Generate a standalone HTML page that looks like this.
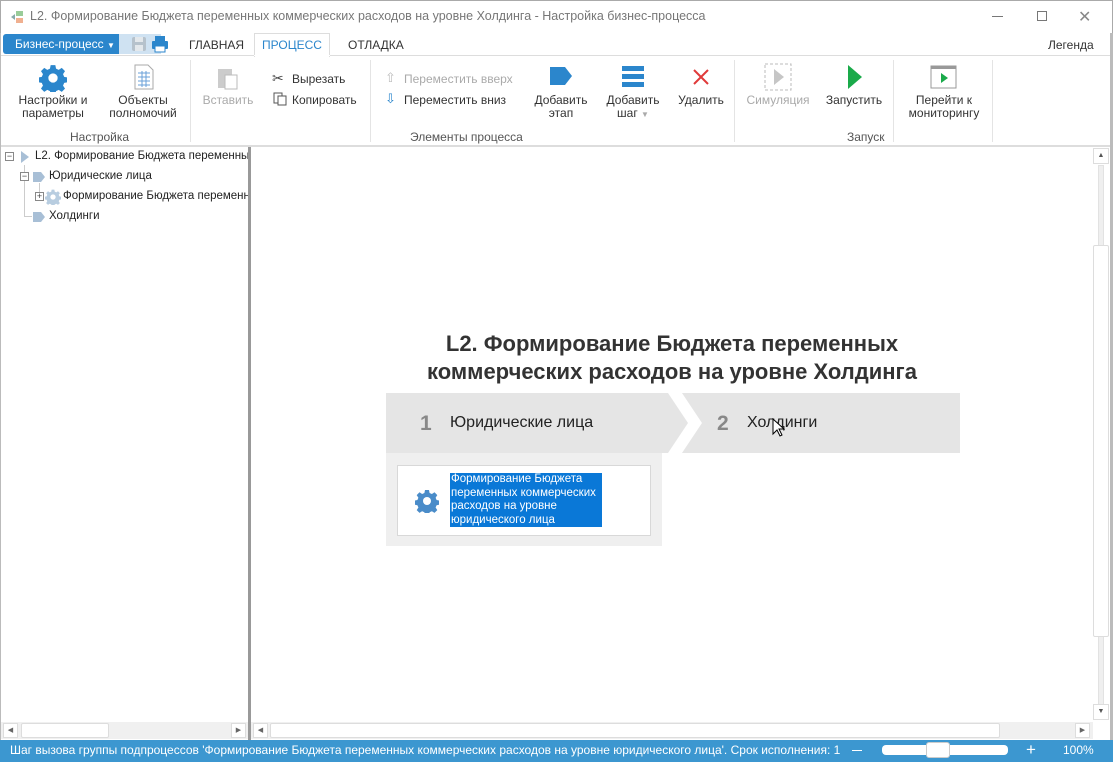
<!DOCTYPE html>
<html><head><meta charset="utf-8"><style>
*{margin:0;padding:0;box-sizing:border-box}
body{width:1113px;height:762px;position:relative;overflow:hidden;background:#fff;font-family:"Segoe UI","Liberation Sans","DejaVu Sans",sans-serif;font-size:12px;color:#222}
.a{position:absolute;white-space:nowrap}
.lbl{position:absolute;text-align:center;font-size:12px;line-height:13px;color:#333}
.grp{position:absolute;top:130px;font-size:12px;color:#555}
.sep{position:absolute;top:60px;width:1px;height:82px;background:#e4e4e4}
.dis{color:#aaa}
</style></head><body>
<div class="a" style="left:0;top:0;width:1113px;height:33px;border-top:1px solid #aaa;border-left:1px solid #aaa;border-right:1px solid #aaa"></div>
<svg class="a" style="left:10px;top:10px" width="16" height="14"><rect x="6" y="1" width="7" height="5" fill="#9c9"/><rect x="6" y="8" width="7" height="5" fill="#f0b090"/><path d="M1 7 L5 4 L5 10Z" fill="#8aa"/></svg>
<div class="a" style="left:30px;top:9px;font-size:12.5px;color:#777">L2. Формирование Бюджета переменных коммерческих расходов на уровне Холдинга - Настройка бизнес-процесса</div>
<div class="a" style="left:992px;top:16px;width:11px;height:1px;background:#777"></div>
<div class="a" style="left:1037px;top:11px;width:10px;height:10px;border:1px solid #777"></div>
<div class="a" style="left:1078px;top:7px;font-size:16px;color:#888">✕</div>
<div class="a" style="left:3px;top:34px;width:123px;height:20px;background:#2b86cc;border-radius:3px;color:#fff;font-size:12px;padding:3px 0 0 12px">Бизнес-процесс <span style="font-size:8px">▼</span></div>
<div class="a" style="left:119px;top:34px;width:42px;height:20px;background:#cfe2f2"></div>
<svg class="a" style="left:131px;top:36px" width="16" height="16"><rect x="1" y="1" width="14" height="14" rx="2" fill="#b6c2cc"/><rect x="4" y="1" width="8" height="5" fill="#e3e8ec"/><rect x="4" y="9" width="8" height="6" fill="#e3e8ec"/></svg>
<svg class="a" style="left:151px;top:35px" width="18" height="18"><rect x="4" y="1" width="10" height="5" fill="#2b86cc"/><rect x="1" y="6" width="16" height="8" rx="1" fill="#2b86cc"/><rect x="4" y="11" width="10" height="6" fill="#fff" stroke="#2b86cc"/></svg>
<div class="a" style="left:189px;top:38px;font-size:12px;color:#333">ГЛАВНАЯ</div>
<div class="a" style="left:254px;top:33px;width:76px;height:24px;border:1px solid #ddd;border-bottom:none;background:#fff;text-align:center;padding-top:4px;color:#2b86cc">ПРОЦЕСС</div>
<div class="a" style="left:348px;top:38px;color:#333">ОТЛАДКА</div>
<div class="a" style="left:1048px;top:38px;color:#333">Легенда</div>
<div class="a" style="left:0;top:55px;width:1113px;height:1px;background:#ddd"></div>
<div class="a" style="left:254px;top:55px;width:76px;height:1px;background:#fff"></div>
<svg class="a" style="left:39px;top:64px" width="28" height="28" viewBox="0 0 24 24"><path fill="#2b86cc" d="M10 1h4l.6 3 2.3 1 2.6-1.7 2.8 2.8-1.7 2.6 1 2.3 3 .6v4l-3 .6-1 2.3 1.7 2.6-2.8 2.8-2.6-1.7-2.300 1-.6 3h-4l-.6-3-2.3-1-2.6 1.7-2.8-2.8 1.7-2.6-1-2.3-3-.6v-4l3-.6 1-2.3-1.7-2.6 2.8-2.8 2.6 1.7 2.3-1z"/><circle cx="12" cy="12" r="4" fill="#fff"/></svg>
<div class="lbl" style="left:12px;top:94px;width:82px">Настройки и<br>параметры</div>
<svg class="a" style="left:133px;top:64px" width="22" height="26"><path d="M2 1h13l5 5v19H2z" fill="#fff" stroke="#aaa"/><g stroke="#6aa0d8"><path d="M5 9h12M5 13h12M5 17h12M5 21h12M9 7v16M13 7v16"/></g></svg>
<div class="lbl" style="left:100px;top:94px;width:86px">Объекты<br>полномочий</div>
<div class="grp" style="left:70px">Настройка</div>
<div class="sep" style="left:190px"></div>
<svg class="a" style="left:217px;top:66px" width="22" height="24"><rect x="1" y="3" width="14" height="19" fill="#ccc"/><rect x="8" y="9" width="12" height="14" fill="#fff" stroke="#bbb"/></svg>
<div class="lbl dis" style="left:198px;top:94px;width:60px;color:#aaa">Вставить</div>
<div class="a" style="left:272px;top:70px;font-size:14px;color:#444">✂</div>
<div class="a" style="left:292px;top:72px;color:#333">Вырезать</div>
<svg class="a" style="left:273px;top:92px" width="14" height="14"><rect x="1" y="1" width="8" height="10" fill="#fff" stroke="#555"/><rect x="5" y="4" width="8" height="9" fill="#fff" stroke="#555"/></svg>
<div class="a" style="left:292px;top:93px;color:#333">Копировать</div>
<div class="sep" style="left:370px"></div>
<div class="a" style="left:385px;top:70px;color:#bbb;font-size:13px">⇧</div>
<div class="a" style="left:404px;top:72px;color:#aaa">Переместить вверх</div>
<div class="a" style="left:385px;top:91px;color:#2b86cc;font-size:13px">⇩</div>
<div class="a" style="left:404px;top:93px;color:#333">Переместить вниз</div>
<div class="grp" style="left:410px">Элементы процесса</div>
<svg class="a" style="left:550px;top:67px" width="24" height="18"><path d="M0 0h15l7 9-7 9H0z" fill="#2b86cc"/></svg>
<div class="lbl" style="left:526px;top:94px;width:70px">Добавить<br>этап</div>
<svg class="a" style="left:622px;top:66px" width="22" height="22"><rect y="0" width="22" height="5" fill="#2b86cc"/><rect y="8" width="22" height="5" fill="#2b86cc"/><rect y="16" width="22" height="5" fill="#2b86cc"/></svg>
<div class="lbl" style="left:598px;top:94px;width:70px">Добавить<br>шаг <span style="color:#aaa;font-size:8px">▼</span></div>
<svg class="a" style="left:692px;top:68px" width="18" height="18"><path d="M2 2L16 16M16 2L2 16" stroke="#e03a3a" stroke-width="2"/></svg>
<div class="lbl" style="left:672px;top:94px;width:58px">Удалить</div>
<div class="sep" style="left:734px"></div>
<svg class="a" style="left:764px;top:63px" width="28" height="28"><rect x="1" y="1" width="26" height="26" fill="none" stroke="#bbb" stroke-dasharray="3 2"/><path d="M10 6l10 8-10 8z" fill="#c6c6c6"/></svg>
<div class="lbl" style="left:744px;top:94px;width:68px;color:#aaa">Симуляция</div>
<svg class="a" style="left:846px;top:64px" width="18" height="26"><path d="M2 1l14 12L2 25z" fill="#1aaa4a"/></svg>
<div class="lbl" style="left:820px;top:94px;width:68px">Запустить</div>
<div class="grp" style="left:847px">Запуск</div>
<div class="sep" style="left:893px"></div>
<svg class="a" style="left:930px;top:65px" width="27" height="24"><rect x="1" y="1" width="25" height="22" fill="#fff" stroke="#999"/><rect x="1" y="1" width="25" height="3" fill="#999"/><path d="M11 8l7 5-7 5z" fill="#1aaa4a"/></svg>
<div class="lbl" style="left:900px;top:94px;width:88px">Перейти к<br>мониторингу</div>
<div class="sep" style="left:992px"></div>
<div class="a" style="left:0;top:145px;width:1113px;height:2px;background:#ddd"></div>
<div class="a" style="left:5px;top:152px;width:9px;height:9px;border:1px solid #888;font-size:9px;line-height:6px;text-align:center;color:#444">−</div>
<svg class="a" style="left:20px;top:150px" width="10" height="14"><path d="M1 1l8 6-8 6z" fill="#a8bfd6"/></svg>
<div class="a" style="left:35px;top:150px;font-size:11.5px;width:213px;overflow:hidden">L2. Формирование Бюджета переменных коммерческих</div>
<div class="a" style="left:24px;top:165px;width:1px;height:52px;background:#ccc"></div>
<div class="a" style="left:24px;top:216px;width:8px;height:1px;background:#ccc"></div>
<div class="a" style="left:20px;top:172px;width:9px;height:9px;border:1px solid #888;background:#fff;font-size:9px;line-height:6px;text-align:center;color:#444">−</div>
<svg class="a" style="left:33px;top:172px" width="13" height="10"><path d="M0 0h8l4 5-4 5H0z" fill="#a8bfd6"/></svg>
<div class="a" style="left:49px;top:170px;font-size:11.5px">Юридические лица</div>
<div class="a" style="left:39px;top:183px;width:1px;height:10px;background:#ccc"></div>
<div class="a" style="left:35px;top:192px;width:9px;height:9px;border:1px solid #888;background:#fff;font-size:9px;line-height:7px;text-align:center;color:#444">+</div>
<svg class="a" style="left:45px;top:189px" width="16" height="16" viewBox="0 0 24 24"><path fill="#b8cde0" d="M10 1h4l.6 3 2.3 1 2.6-1.7 2.8 2.8-1.7 2.6 1 2.3 3 .6v4l-3 .6-1 2.3 1.7 2.6-2.8 2.8-2.6-1.7-2.3 1-.6 3h-4l-.6-3-2.3-1-2.6 1.7-2.8-2.8 1.7-2.6-1-2.3-3-.6v-4l3-.6 1-2.3-1.7-2.6 2.8-2.8 2.6 1.7 2.3-1z"/><circle cx="12" cy="12" r="4" fill="#fff"/></svg>
<div class="a" style="left:63px;top:190px;font-size:11.5px;width:185px;overflow:hidden">Формирование Бюджета переменных</div>
<svg class="a" style="left:33px;top:212px" width="13" height="10"><path d="M0 0h8l4 5-4 5H0z" fill="#a8bfd6"/></svg>
<div class="a" style="left:49px;top:210px;font-size:11.5px">Холдинги</div>
<div class="a" style="left:248px;top:147px;width:3px;height:593px;background:#999"></div>
<div class="a" style="left:0;top:722px;width:248px;height:17px;background:#f0f0f0"></div>
<div class="a" style="left:3px;top:723px;width:15px;height:15px;background:#fff;border:1px solid #ddd;font-size:7px;color:#666;text-align:center;line-height:13px">◀</div>
<div class="a" style="left:21px;top:723px;width:88px;height:15px;background:#fff;border:1px solid #ddd;border-radius:2px"></div>
<div class="a" style="left:231px;top:723px;width:15px;height:15px;background:#fff;border:1px solid #ddd;font-size:7px;color:#666;text-align:center;line-height:13px">▶</div>
<div class="a" style="left:251px;top:722px;width:842px;height:17px;background:#f0f0f0"></div>
<div class="a" style="left:253px;top:723px;width:15px;height:15px;background:#fff;border:1px solid #ddd;font-size:7px;color:#666;text-align:center;line-height:13px">◀</div>
<div class="a" style="left:270px;top:723px;width:730px;height:15px;background:#fff;border:1px solid #ddd;border-radius:2px"></div>
<div class="a" style="left:1075px;top:723px;width:15px;height:15px;background:#fff;border:1px solid #ddd;font-size:7px;color:#666;text-align:center;line-height:13px">▶</div>
<div class="a" style="left:1092px;top:147px;width:18px;height:575px;background:#fff"></div>
<div class="a" style="left:1098px;top:165px;width:6px;height:540px;background:#efefef;border:1px solid #e2e2e2"></div>
<div class="a" style="left:1093px;top:148px;width:16px;height:16px;background:#fff;border:1px solid #ddd;font-size:7px;color:#555;text-align:center;line-height:14px">▲</div>
<div class="a" style="left:1093px;top:245px;width:16px;height:392px;background:#fff;border:1px solid #ddd;border-radius:2px"></div>
<div class="a" style="left:1093px;top:704px;width:16px;height:16px;background:#fff;border:1px solid #ddd;font-size:7px;color:#555;text-align:center;line-height:14px">▼</div>
<div class="a" style="left:1110px;top:33px;width:3px;height:707px;background:#bbb"></div>
<div class="a" style="left:0;top:33px;width:1px;height:707px;background:#bbb"></div>
<div class="a" style="left:386px;top:330px;width:572px;text-align:center;font-family:'Liberation Sans',sans-serif;font-weight:bold;font-size:22px;line-height:28px;color:#333">L2. Формирование Бюджета переменных<br>коммерческих расходов на уровне Холдинга</div>
<svg class="a" style="left:386px;top:393px" width="575" height="61"><path d="M0 0H282L302 30 282 60H0z" fill="#e5e5e5"/><path d="M296 0H574V60H296L316 30z" fill="#e5e5e5"/></svg>
<div class="a" style="left:420px;top:412px;font-family:'Liberation Sans',sans-serif;font-weight:bold;font-size:21px;color:#888">1</div>
<div class="a" style="left:450px;top:414px;font-family:'Liberation Sans',sans-serif;font-size:16px;color:#222">Юридические лица</div>
<div class="a" style="left:717px;top:412px;font-family:'Liberation Sans',sans-serif;font-weight:bold;font-size:21px;color:#888">2</div>
<div class="a" style="left:747px;top:414px;font-family:'Liberation Sans',sans-serif;font-size:16px;color:#222">Холдинги</div>
<svg class="a" style="left:772px;top:418px" width="13" height="20"><path d="M1 1v15l4-4 3 6 2-1-3-6h5z" fill="#fff" stroke="#000"/></svg>
<div class="a" style="left:386px;top:453px;width:276px;height:93px;background:#efefef"></div>
<div class="a" style="left:397px;top:465px;width:254px;height:71px;background:#fff;border:1px solid #d8d8d8"></div>
<svg class="a" style="left:415px;top:489px" width="24" height="24" viewBox="0 0 24 24"><path fill="#4a8cc9" d="M10 1h4l.6 3 2.3 1 2.6-1.7 2.8 2.8-1.7 2.6 1 2.3 3 .6v4l-3 .6-1 2.3 1.7 2.6-2.8 2.8-2.6-1.7-2.3 1-.6 3h-4l-.6-3-2.3-1-2.6 1.7-2.8-2.8 1.7-2.6-1-2.3-3-.6v-4l3-.6 1-2.3-1.7-2.6 2.8-2.8 2.6 1.7 2.3-1z"/><circle cx="12" cy="12" r="4" fill="#fff"/></svg>
<div class="a" style="left:450px;top:473px;width:152px;height:54px;background:#0a78d7;color:#fff;font-family:'Liberation Sans',sans-serif;font-size:11.5px;line-height:13.5px;white-space:normal;padding-left:1px">Формирование Бюджета переменных коммерческих расходов на уровне юридического лица</div>
<div class="a" style="left:0;top:740px;width:1113px;height:22px;background:#3c97d0"></div>
<div class="a" style="left:10px;top:743px;color:#fff;font-size:12px">Шаг вызова группы подпроцессов 'Формирование Бюджета переменных коммерческих расходов на уровне юридического лица'. Срок исполнения: 1</div>
<div class="a" style="left:852px;top:750px;width:10px;height:1px;background:#fff"></div>
<div class="a" style="left:882px;top:745px;width:126px;height:10px;background:#fff;border-radius:4px"></div>
<div class="a" style="left:926px;top:742px;width:24px;height:16px;background:#fff;border:1px solid #ccc;border-radius:3px"></div>
<div class="a" style="left:1026px;top:740px;color:#fff;font-size:17px">+</div>
<div class="a" style="left:1063px;top:743px;color:#fff;font-size:12px">100%</div>
</body></html>
